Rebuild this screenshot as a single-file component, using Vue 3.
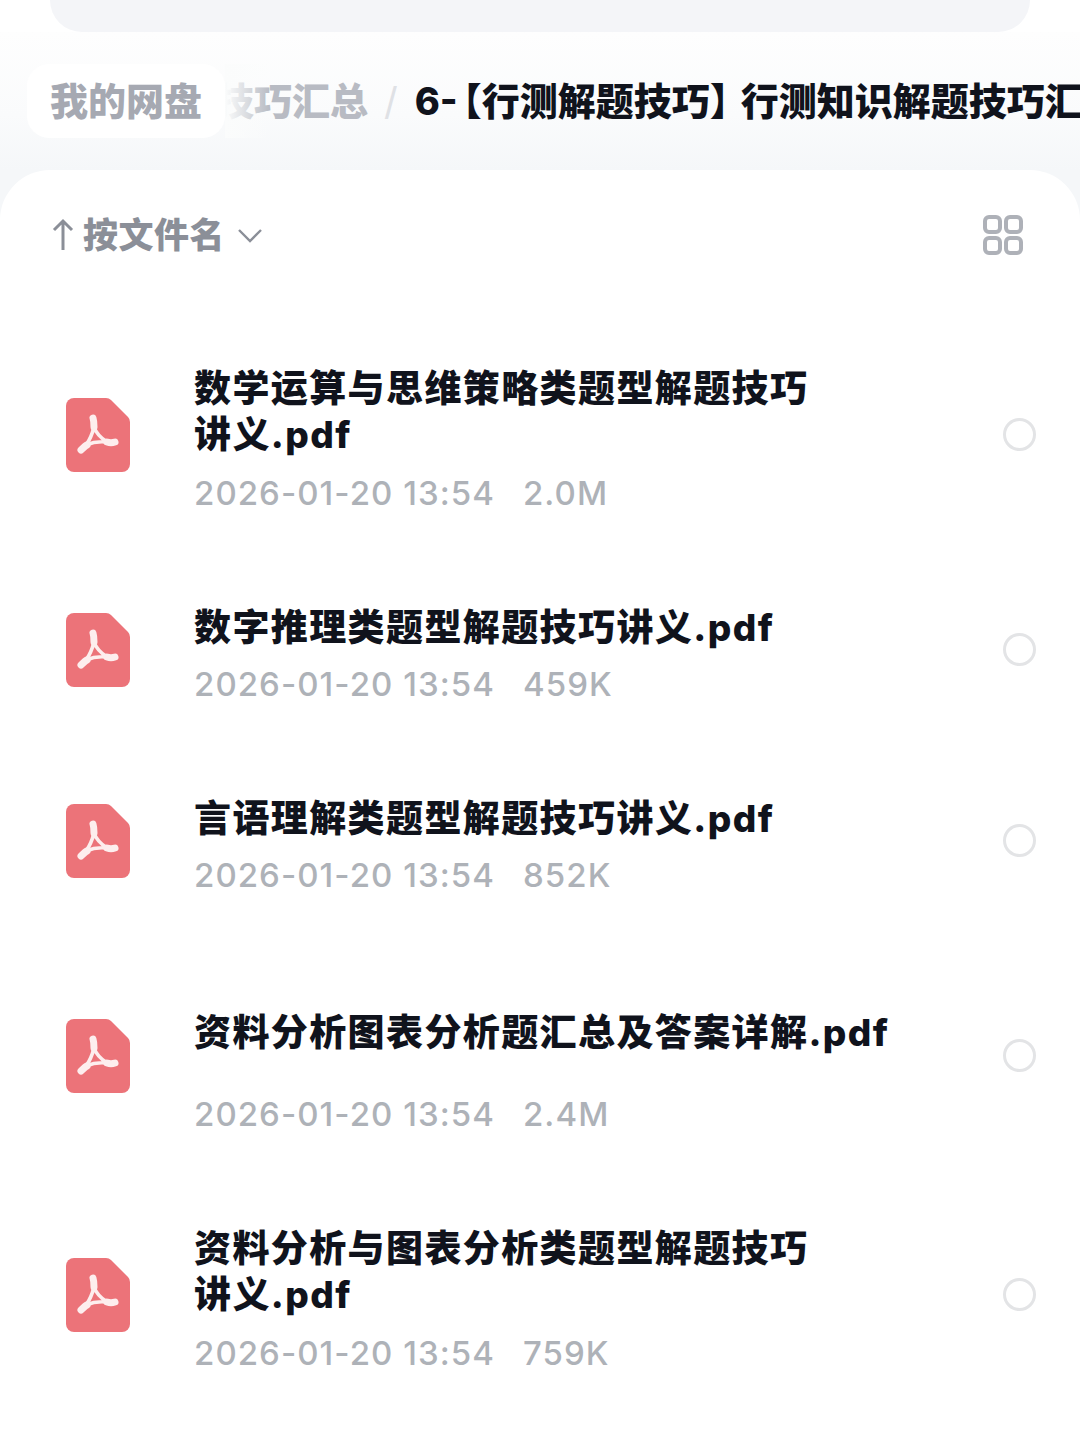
<script setup>
// File list rows; `spaced` keeps a one-line title in a two-line box
const files = [
  { name: '数学运算与思维策略类题型解题技巧讲义.pdf', size: '2.0M', wrap: true },
  { name: '数字推理类题型解题技巧讲义.pdf', size: '459K' },
  { name: '言语理解类题型解题技巧讲义.pdf', size: '852K' },
  { name: '资料分析图表分析题汇总及答案详解.pdf', size: '2.4M', spaced: true },
  { name: '资料分析与图表分析类题型解题技巧讲义.pdf', size: '759K', wrap: true }
]
</script>

<template>
  <div class="page">
    <div class="search-edge"></div>

    <div class="crumbs">
      <div class="home">我的网盘</div>
      <div class="trail">
        <span class="parent">技巧汇总</span>
        <span class="sep">/</span>
        <span class="current">6-<span class="open">【</span>行测解题技巧<span class="close">】</span>行测知识解题技巧汇总</span>
        <div class="fade"></div>
      </div>
    </div>

    <div class="panel-wrap">
      <div class="panel">
        <div class="toolbar">
          <div class="sort">
            <svg class="arrow" viewBox="0 0 22 34" width="22" height="34">
              <path d="M11 32V3M2 12l9-9 9 9" fill="none" stroke="#8b8f98" stroke-width="3" />
            </svg>
            <span>按文件名</span>
            <svg class="chevron" viewBox="0 0 26 16" width="26" height="16">
              <path d="M2 3l11 11L24 3" fill="none" stroke="#8b8f98" stroke-width="2.4" />
            </svg>
          </div>
          <svg class="grid-btn" viewBox="0 0 40 40" width="40" height="40">
            <g fill="none" stroke="#aeb1b8" stroke-width="4">
              <rect x="2" y="2" width="15" height="15" rx="4" />
              <rect x="23" y="2" width="15" height="15" rx="4" />
              <rect x="2" y="23" width="15" height="15" rx="4" />
              <rect x="23" y="23" width="15" height="15" rx="4" />
            </g>
          </svg>
        </div>

        <ul class="list">
          <li v-for="file in files" :key="file.name" class="row">
            <svg class="pdf" viewBox="0 0 64 74" width="64" height="74">
              <path d="M8 0H40Q43 0 45 2L62 19Q64 21 64 24V66a8 8 0 0 1-8 8H8a8 8 0 0 1-8-8V8a8 8 0 0 1 8-8Z" fill="#ec7379" />
              <g fill="none" stroke="#fdeeee" stroke-linecap="round" stroke-linejoin="round">
                <path d="M28 29C26 37 23 43 20 47C27 44 33 43 41 44C35 40 30 35 28 29Z" stroke-width="3.6" />
                <path d="M27 20C28 23 28 26 28 29" stroke-width="7" />
                <path d="M15 52C17 50 19 48 21 47" stroke-width="7" />
                <path d="M41 44C44 45 46 45 49 44" stroke-width="7" />
              </g>
            </svg>
            <div class="info">
              <div class="name" :class="{ wrap: file.wrap, spaced: file.spaced }">
                <span>{{ file.name }}</span>
              </div>
              <div class="meta">
                <span>2026-01-20 13:54</span>
                <span>{{ file.size }}</span>
              </div>
            </div>
            <span class="radio"></span>
          </li>
        </ul>
      </div>
    </div>
  </div>
</template>

<style>
html,
body {
  background: #fff;
}
</style>

<style scoped>
.page {
  width: 1080px;
  height: 1440px;
  overflow: hidden;
  background: #fff;
  font-family: Inter, "Noto Sans CJK SC", sans-serif;
}

.search-edge {
  height: 32px;
  margin: 0 50px;
  background: #f4f5f8;
  border-radius: 0 0 34px 34px;
}

.crumbs {
  height: 138px;
  box-sizing: border-box;
  padding: 32px 0 0 27px;
  display: flex;
  align-items: flex-start;
  background: linear-gradient(#fefefe, #fafbfc 60%, #f5f7f9);
}

.home {
  width: 198px;
  height: 74px;
  flex: none;
  border-radius: 22px;
  background: #fff;
  color: #a6a9b2;
  font-size: 38px;
  font-weight: 800;
  line-height: 74px;
  text-align: center;
}

.trail {
  position: relative;
  flex: 1;
  min-width: 0;
  height: 74px;
  display: flex;
  align-items: center;
  overflow: hidden;
  white-space: nowrap;
  font-size: 38px;
  font-weight: 800;
  line-height: 72px;
}

.parent {
  margin-left: -9px;
  color: #b8bbc3;
}

.sep {
  margin-left: 16px;
  color: #dfe1e5;
  font-weight: 400;
}

.current {
  margin-left: 17px;
  color: #10131c;
}

/* halt trims the brackets to half width, as the reference sets them */
.open,
.close {
  font-feature-settings: "halt";
}

.open {
  margin-left: 5px;
}

.close {
  margin-right: 12px;
}

.fade {
  position: absolute;
  left: 0;
  top: 0;
  width: 45px;
  height: 100%;
  background: linear-gradient(90deg, #fbfcfc, rgba(251, 252, 252, 0));
}

.panel-wrap {
  background: #f5f7f9;
}

.panel {
  height: 1270px;
  background: #fff;
  border-radius: 50px 50px 0 0;
}

.toolbar {
  height: 130px;
  box-sizing: border-box;
  padding: 0 57px 0 52px;
  display: flex;
  align-items: center;
  justify-content: space-between;
}

.sort {
  display: flex;
  align-items: center;
  color: #8b8f98;
  font-size: 35px;
  font-weight: 800;
  line-height: 40px;
  letter-spacing: 0.5px;
}

.arrow {
  margin-right: 9px;
}

.chevron {
  margin-left: 12px;
}

.list {
  list-style: none;
  margin: 0;
  padding: 63px 44px 0 66px;
}

.row {
  display: flex;
  align-items: center;
  padding-bottom: 89px;
}

.pdf {
  flex: none;
  margin-bottom: 7px;
}

.info {
  flex: none;
  width: 720px;
  margin-left: 64px;
}

.name {
  padding-top: 3px;
  color: #10131c;
  font-size: 37px;
  font-weight: 800;
  letter-spacing: 1.4px;
  line-height: 46px;
}

.name.wrap span {
  display: block;
  width: 620px;
}

.name.spaced {
  height: 92px;
  box-sizing: content-box;
  display: flex;
  align-items: center;
}

.meta {
  margin-top: 13px;
  display: flex;
  gap: 28px;
  color: #aeb2b8;
  font-size: 33px;
  font-weight: 500;
  letter-spacing: 1.05px;
  line-height: 40px;
}

.name.wrap + .meta,
.name.spaced + .meta {
  margin-top: 15px;
}

.radio {
  flex: none;
  width: 33px;
  height: 33px;
  box-sizing: border-box;
  margin-left: auto;
  margin-bottom: 7px;
  border: 3px solid #e3e4e6;
  border-radius: 50%;
}
</style>
